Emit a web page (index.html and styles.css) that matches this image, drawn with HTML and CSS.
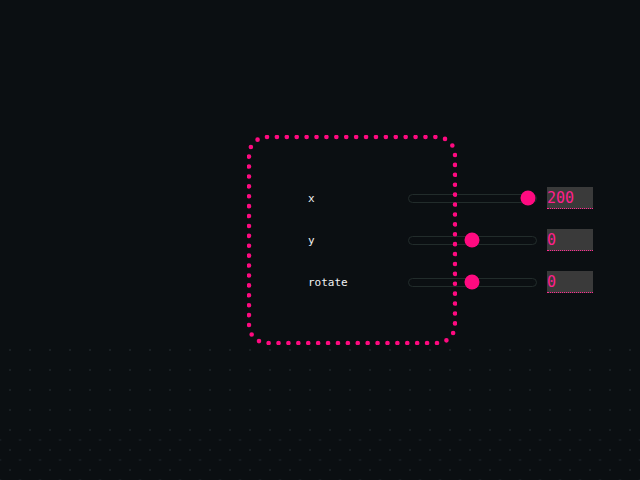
FILE: index.html
```html
<!DOCTYPE html>
<html>
<head>
<meta charset="utf-8">
<link rel="stylesheet" href="styles.css">
</head>
<body>
<div class="stage">
  <div class="controls">
    <div class="row">
      <span class="label">x</span>
      <div class="track"><span class="thumb" style="left:119px"></span></div>
      <input class="value" type="text" value="200">
    </div>
    <div class="row">
      <span class="label">y</span>
      <div class="track"><span class="thumb" style="left:62.5px"></span></div>
      <input class="value" type="text" value="0">
    </div>
    <div class="row">
      <span class="label">rotate</span>
      <div class="track"><span class="thumb" style="left:62.5px"></span></div>
      <input class="value" type="text" value="0">
    </div>
  </div>
  <div class="box">
    <svg width="210" height="210" viewBox="0 0 210 210">
      <rect x="2" y="2" width="206" height="206" rx="18" ry="18" fill="none" stroke="#ff0a80" stroke-width="4.6" stroke-linecap="round" stroke-dasharray="0 1" pathLength="80"/>
    </svg>
  </div>
</div>
<div class="grid">
  <div class="grid-low"></div>
</div>
</body>
</html>
```
FILE: styles.css
```css
html, body {
  margin: 0;
  padding: 0;
}
body {
  width: 640px;
  height: 480px;
  background: #0b0f12;
  display: flex;
  flex-direction: column;
  overflow: hidden;
  font-family: "DejaVu Sans Mono", monospace;
}
.stage {
  position: relative;
  height: 340px;
  flex: none;
}
.controls {
  display: flex;
  flex-direction: column;
  gap: 20px;
  padding: 187px 0 0 308px;
}
.row {
  display: flex;
  align-items: center;
  height: 22px;
}
.label {
  width: 100px;
  font-size: 11px;
  color: #f2f2f2;
}
.track {
  position: relative;
  width: 129px;
  height: 9px;
  box-sizing: border-box;
  border: 1px solid #222c2b;
  border-radius: 5px;
}
.thumb {
  position: absolute;
  top: 50%;
  width: 15px;
  height: 15px;
  border-radius: 50%;
  background: #ff0a80;
  transform: translate(-50%, -50%);
}
.value {
  margin-left: 10px;
  width: 46px;
  height: 22px;
  box-sizing: border-box;
  padding: 0;
  border: none;
  border-bottom: 1px dotted #ff2a90;
  background: #3a3a3a;
  color: #ff1f8c;
  font-family: "DejaVu Sans Mono", monospace;
  font-size: 15px;
  outline: none;
}
.box {
  position: absolute;
  left: 247px;
  top: 135px;
  width: 210px;
  height: 210px;
}
.box svg {
  display: block;
}
.grid {
  flex: 1;
  background-image: radial-gradient(circle at 10px 10px, #191f23 0.9px, transparent 1.5px);
  background-size: 20px 20px;
  display: flex;
  flex-direction: column;
}
.grid-low {
  margin-top: 90px;
  flex: 1;
  background-image: radial-gradient(ellipse 2.5px 1.5px at 10px 10px, #161d21 0.8px, transparent 2px);
  background-size: 20px 20px;
  background-position: 10px 0;
}
```
